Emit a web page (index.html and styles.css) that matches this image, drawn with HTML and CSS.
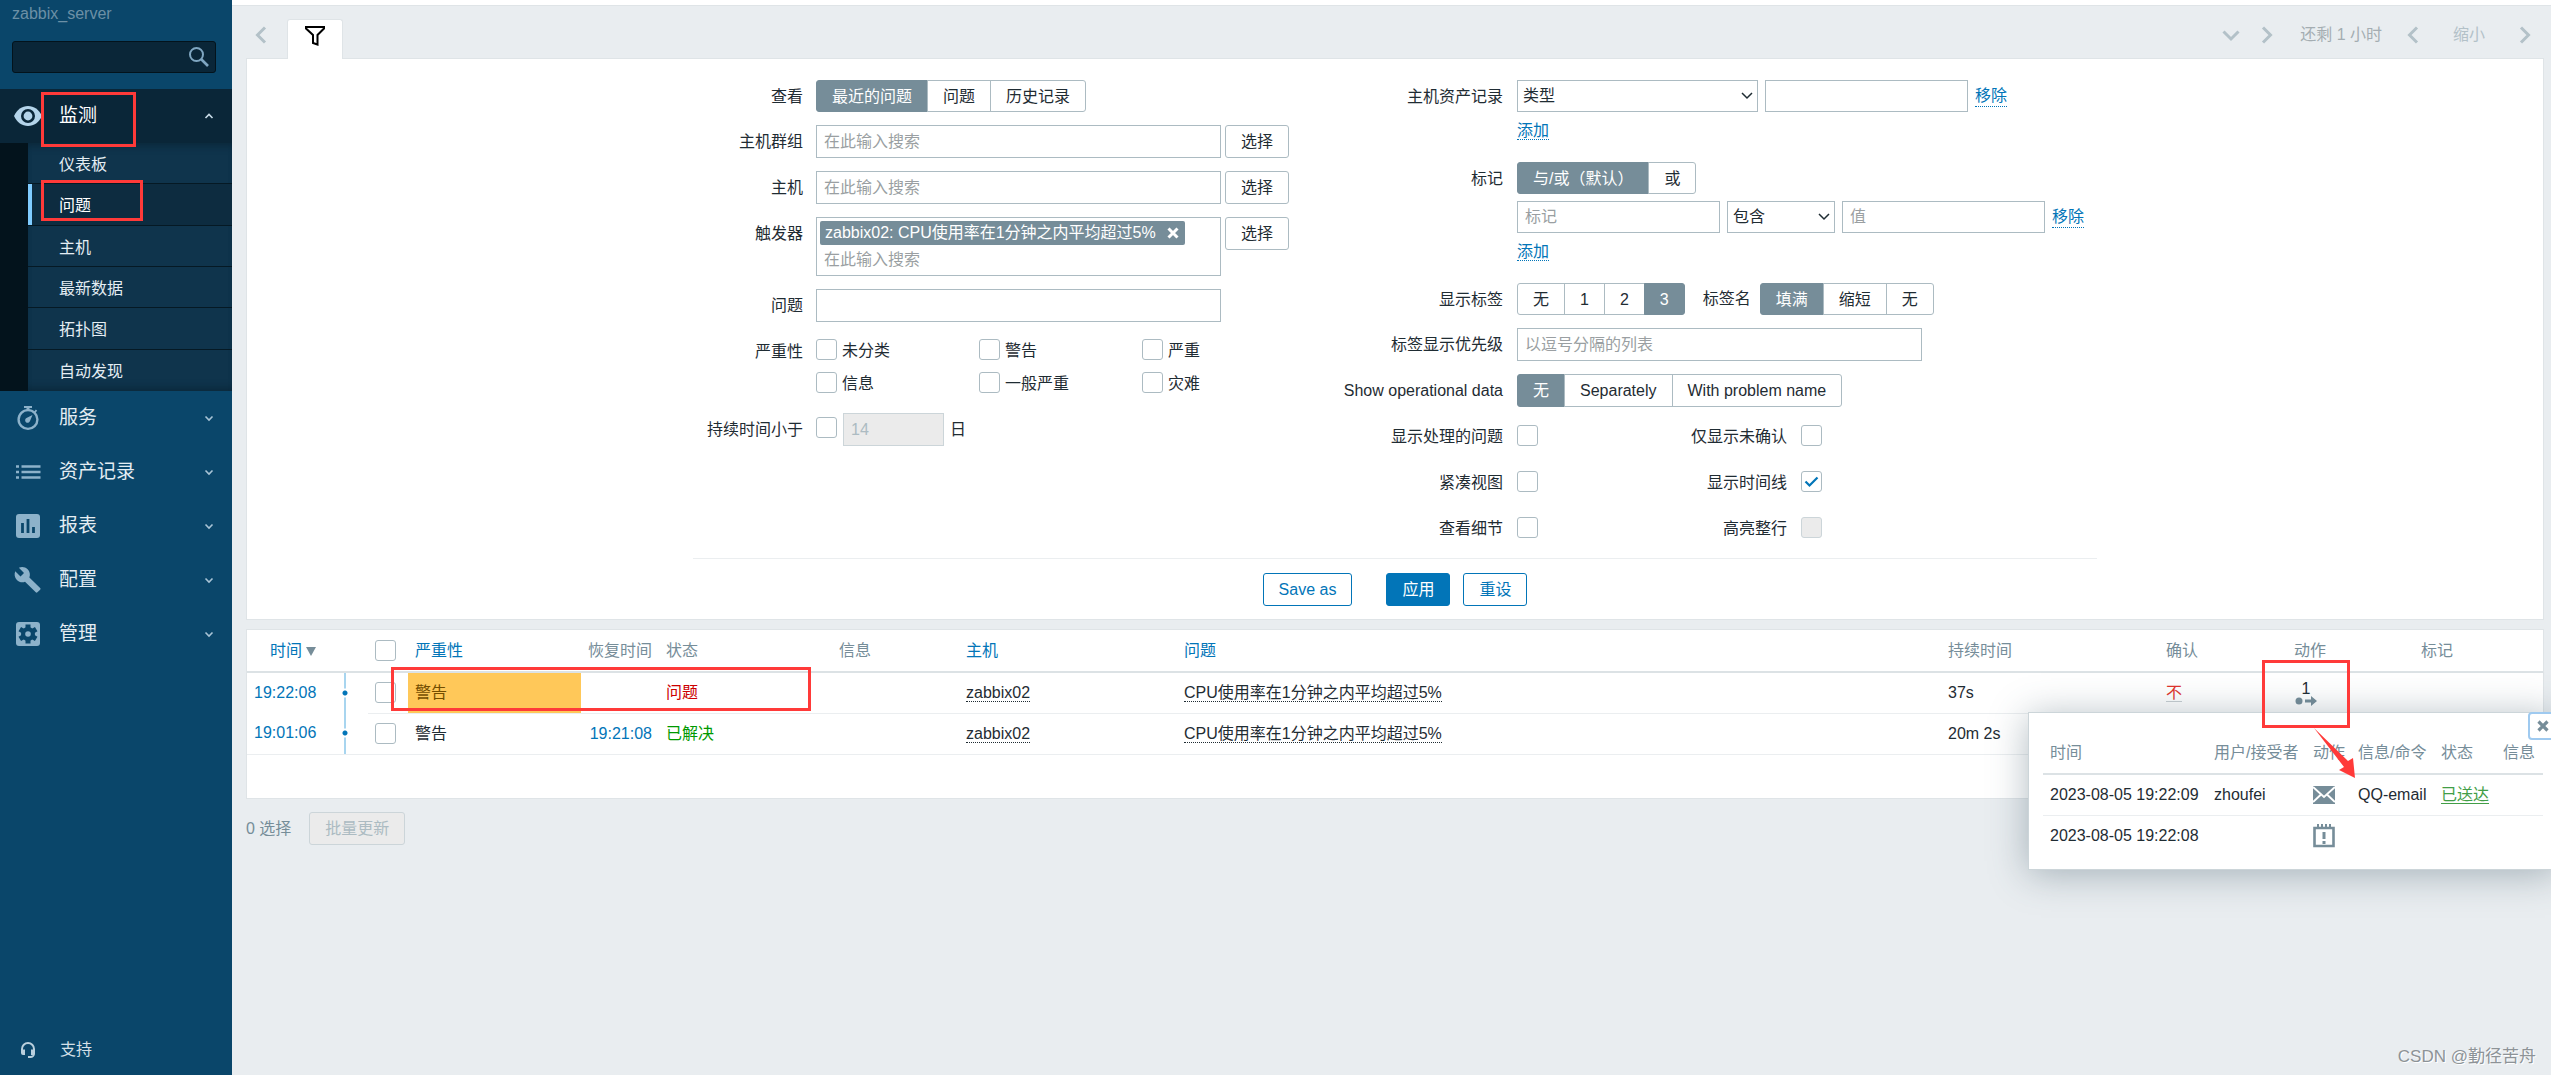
FILE: index.html
```html
<!DOCTYPE html>
<html lang="zh-CN">
<head>
<meta charset="utf-8">
<title>问题</title>
<link rel="stylesheet" href="styles.css">
</head>
<body>
<div class="page">
  <aside class="sidebar">
    <div class="server-name">zabbix_server</div>
    <form class="search">
      <input type="text" aria-label="搜索">
      <button type="button" aria-label="搜索"><svg width="20" height="20" viewBox="0 0 20 20"><circle cx="7.500" cy="7.500" r="6.500" fill="none" stroke="#7fa6c1" stroke-width="2"/><path d="M12 12l7 7" stroke="#7fa6c1" stroke-width="2.600"/></svg></button>
    </form>
    <nav>
      <ul class="menu">
        <li class="open">
          <a class="menu-item" href="#">
            <svg class="icon" width="30" height="30" viewBox="0 0 30 30"><path d="M1 15C4 8.500 9 5 15 5s11 3.500 14 10c-3 6.500-8 10-14 10S4 21.500 1 15z" fill="#b4d4ea"/><circle cx="15" cy="15" r="5.700" fill="#b4d4ea" stroke="#0a2638" stroke-width="2.600"/></svg>
            <span>监测</span>
            <svg class="chev" width="10" height="10" viewBox="0 0 10 10"><path d="M1.500 7L5 3.500 8.500 7" fill="none" stroke="#c9dbe7" stroke-width="1.600"/></svg>
          </a>
          <span class="mark mark-monitoring"></span>
          <ul class="submenu">
            <li><a href="#">仪表板</a></li>
            <li class="selected"><a href="#">问题</a><span class="mark mark-problems"></span></li>
            <li><a href="#">主机</a></li>
            <li><a href="#">最新数据</a></li>
            <li><a href="#">拓扑图</a></li>
            <li><a href="#">自动发现</a></li>
          </ul>
        </li>
        <li>
          <a class="menu-item" href="#">
            <svg class="icon" width="30" height="30" viewBox="0 0 30 30"><g fill="none" stroke="#8db2ca"><circle cx="15" cy="16.500" r="9.400" stroke-width="2.400"/><path d="M11 4h8" stroke-width="2"/><path d="M15 4v3" stroke-width="3"/><path d="M21.500 9.500l2-2.300" stroke-width="1.800"/></g><path d="M19.500 12l-2.500 6a2.500 2.500 0 1 1-3.500-3z" fill="#8db2ca"/></svg>
            <span>服务</span>
            <svg class="chev" width="10" height="10" viewBox="0 0 10 10"><path d="M1.500 3.500L5 7l3.500-3.500" fill="none" stroke="#a9c4d6" stroke-width="1.600"/></svg>
          </a>
        </li>
        <li>
          <a class="menu-item" href="#">
            <svg class="icon" width="30" height="30" viewBox="0 0 30 30"><path d="M3 9.500h3M8.500 9.500h19M3 15h3M8.500 15h19M3 20.500h3M8.500 20.500h19" stroke="#8db2ca" stroke-width="2.600"/></svg>
            <span>资产记录</span>
            <svg class="chev" width="10" height="10" viewBox="0 0 10 10"><path d="M1.500 3.500L5 7l3.500-3.500" fill="none" stroke="#a9c4d6" stroke-width="1.600"/></svg>
          </a>
        </li>
        <li>
          <a class="menu-item" href="#">
            <svg class="icon" width="30" height="30" viewBox="0 0 30 30"><rect x="3" y="3" width="24" height="24" rx="3" fill="#8db2ca"/><path d="M9.500 12v10M15 8v14M20.500 16v6" stroke="#0a466a" stroke-width="2.800"/></svg>
            <span>报表</span>
            <svg class="chev" width="10" height="10" viewBox="0 0 10 10"><path d="M1.500 3.500L5 7l3.500-3.500" fill="none" stroke="#a9c4d6" stroke-width="1.600"/></svg>
          </a>
        </li>
        <li>
          <a class="menu-item" href="#">
            <svg class="icon" width="30" height="30" viewBox="0 0 24 24"><path fill="#8db2ca" d="M21.700 18.400l-8.600-8.500c.9-2.200.4-4.700-1.400-6.500-1.900-1.900-4.700-2.200-7-1.200l4.100 4.100L6 9.100 1.800 5C.8 7.300 1.300 10.100 3.100 11.900c1.800 1.800 4.300 2.300 6.500 1.400l8.600 8.500c.4.400 1 .4 1.300 0l2.200-2.100c.4-.4.400-1 0-1.300z"/></svg>
            <span>配置</span>
            <svg class="chev" width="10" height="10" viewBox="0 0 10 10"><path d="M1.500 3.500L5 7l3.500-3.500" fill="none" stroke="#a9c4d6" stroke-width="1.600"/></svg>
          </a>
        </li>
        <li>
          <a class="menu-item" href="#">
            <svg class="icon" width="30" height="30" viewBox="0 0 30 30"><rect x="3" y="3" width="24" height="24" rx="3" fill="#8db2ca"/><circle cx="15" cy="15" r="7" fill="#0a466a"/><path d="M15 5.500v19M6.800 10.200l16.400 9.600M23.200 10.200L6.800 19.800" stroke="#0a466a" stroke-width="5"/><circle cx="15" cy="15" r="2.800" fill="#8db2ca"/></svg>
            <span>管理</span>
            <svg class="chev" width="10" height="10" viewBox="0 0 10 10"><path d="M1.500 3.500L5 7l3.500-3.500" fill="none" stroke="#a9c4d6" stroke-width="1.600"/></svg>
          </a>
        </li>
      </ul>
    </nav>
    <a class="support" href="#">
      <svg class="icon" width="30" height="18" viewBox="0 0 30 18"><path d="M9 11V8a6 6 0 0 1 12 0v4.500a3.500 3.500 0 0 1-3.500 3.500H15" fill="none" stroke="#b9cfdd" stroke-width="2"/><path d="M8 8.500h4V14h-2a2 2 0 0 1-2-2zM18 8.500h4V12a2 2 0 0 1-2 2h-2z" fill="#b9cfdd"/></svg>
      <span>支持</span>
    </a>
  </aside>

  <main class="content">
    <div class="top-strip"></div>
    <div class="tab-bar">
      <button class="nav-btn" type="button" aria-label="上一个"><svg width="18" height="18" viewBox="0 0 18 18"><path d="M13 1.500L5.500 9l7.500 7.500"/></svg></button>
      <button class="tab" type="button" aria-label="过滤器"><svg width="20" height="20" viewBox="0 0 20 20"><path d="M1 1h18v1.500L12.500 9v9.500L8 17V9L1 2.500z" fill="none" stroke="#000" stroke-width="2"/></svg></button>
      <div class="time-nav">
        <button class="nav-btn" type="button" aria-label="展开"><svg width="18" height="18" viewBox="0 0 18 18"><path d="M1.500 5.500L9 13l7.500-7.500"/></svg></button>
        <button class="nav-btn" type="button" aria-label="下一个"><svg width="18" height="18" viewBox="0 0 18 18"><path d="M5 1.500L12.500 9 5 16.500"/></svg></button>
        <span class="time-range">还剩 1 小时</span>
        <button class="nav-btn" type="button" aria-label="后退"><svg width="18" height="18" viewBox="0 0 18 18"><path d="M13 1.500L5.500 9l7.500 7.500"/></svg></button>
        <button class="zoom-out" type="button">缩小</button>
        <button class="nav-btn" type="button" aria-label="前进"><svg width="18" height="18" viewBox="0 0 18 18"><path d="M5 1.500L12.500 9 5 16.500"/></svg></button>
      </div>
    </div>

    <form class="panel filter">
      <div class="filter-body">
        <div class="fields fields-left">
          <span class="label">查看</span>
          <div class="segmented">
            <input type="radio" name="show" id="show1" checked><label for="show1">最近的问题</label>
            <input type="radio" name="show" id="show2"><label for="show2">问题</label>
            <input type="radio" name="show" id="show3"><label for="show3">历史记录</label>
          </div>
          <label class="label" for="groups">主机群组</label>
          <div class="control"><div class="multiselect"><input id="groups" type="text" placeholder="在此输入搜索"></div><button class="btn-grey" type="button">选择</button></div>
          <label class="label" for="hosts">主机</label>
          <div class="control"><div class="multiselect"><input id="hosts" type="text" placeholder="在此输入搜索"></div><button class="btn-grey" type="button">选择</button></div>
          <label class="label" for="triggers">触发器</label>
          <div class="control"><div class="multiselect"><span class="chip">zabbix02: CPU使用率在1分钟之内平均超过5%<button type="button" aria-label="移除"><svg width="12" height="12" viewBox="0 0 12 12"><path d="M1.500 1.500l9 9M10.500 1.500l-9 9" stroke="#fff" stroke-width="3"/></svg></button></span><input id="triggers" type="text" placeholder="在此输入搜索"></div><button class="btn-grey" type="button">选择</button></div>
          <label class="label" for="name">问题</label>
          <input class="text w-wide" id="name" type="text">
          <span class="label">严重性</span>
          <div class="severities">
            <label><input type="checkbox">未分类</label>
            <label><input type="checkbox">警告</label>
            <label><input type="checkbox">严重</label>
            <label><input type="checkbox">信息</label>
            <label><input type="checkbox">一般严重</label>
            <label><input type="checkbox">灾难</label>
          </div>
          <label class="label" for="age">持续时间小于</label>
          <div class="control age"><input id="age" type="checkbox"><input class="text w-days" type="text" value="14" aria-label="日" disabled><span>日</span></div>
        </div>

        <div class="fields fields-right">
          <span class="label">主机资产记录</span>
          <div class="stack">
            <div class="control wide"><select class="w-type" aria-label="主机资产记录"><option>类型</option></select><input class="text w-tag" type="text" aria-label="值"><a class="link" href="#">移除</a></div>
            <div class="add"><a class="link" href="#">添加</a></div>
          </div>
          <span class="label">标记</span>
          <div class="stack">
            <div class="segmented">
              <input type="radio" name="eval" id="eval1" checked><label for="eval1">与/或（默认）</label>
              <input type="radio" name="eval" id="eval2"><label for="eval2">或</label>
            </div>
            <div class="control wide"><input class="text w-tag" type="text" placeholder="标记" aria-label="标记"><select class="w-op" aria-label="运算符"><option>包含</option></select><input class="text w-tag" type="text" placeholder="值" aria-label="值"><a class="link" href="#">移除</a></div>
            <div class="add"><a class="link" href="#">添加</a></div>
          </div>
          <span class="label">显示标签</span>
          <div class="control">
            <div class="segmented">
              <input type="radio" name="tags" id="tags0"><label for="tags0">无</label>
              <input type="radio" name="tags" id="tags1"><label for="tags1">1</label>
              <input type="radio" name="tags" id="tags2"><label for="tags2">2</label>
              <input type="radio" name="tags" id="tags3" checked><label for="tags3">3</label>
            </div>
            <span class="inline-label">标签名</span>
            <div class="segmented">
              <input type="radio" name="tagname" id="tn0" checked><label for="tn0">填满</label>
              <input type="radio" name="tagname" id="tn1"><label for="tn1">缩短</label>
              <input type="radio" name="tagname" id="tn2"><label for="tn2">无</label>
            </div>
          </div>
          <label class="label" for="priority">标签显示优先级</label>
          <input class="text w-wide" id="priority" type="text" placeholder="以逗号分隔的列表">
          <span class="label">Show operational data</span>
          <div class="segmented tall">
            <input type="radio" name="op" id="op0" checked><label for="op0">无</label>
            <input type="radio" name="op" id="op1"><label for="op1">Separately</label>
            <input type="radio" name="op" id="op2"><label for="op2">With problem name</label>
          </div>
          <label class="label" for="c1">显示处理的问题</label>
          <div class="checks"><input id="c1" type="checkbox"><label for="c2">仅显示未确认</label><input id="c2" type="checkbox"></div>
          <label class="label" for="c3">紧凑视图</label>
          <div class="checks"><input id="c3" type="checkbox"><label for="c4">显示时间线</label><input id="c4" type="checkbox" checked></div>
          <label class="label" for="c5">查看细节</label>
          <div class="checks"><input id="c5" type="checkbox"><label for="c6">高亮整行</label><input id="c6" type="checkbox" disabled></div>
        </div>
      </div>
      <div class="filter-actions">
        <button class="btn save" type="button">Save as</button>
        <button class="btn primary" type="button">应用</button>
        <button class="btn" type="button">重设</button>
      </div>
    </form>

    <section class="panel results">
      <table class="problems">
        <colgroup><col class="c-time"><col class="c-line"><col class="c-check"><col class="c-sev"><col class="c-rec"><col class="c-status"><col class="c-info"><col class="c-host"><col><col class="c-dur"><col class="c-ack"><col class="c-act"><col class="c-tags"></colgroup>
        <thead>
          <tr><th class="right"><a href="#">时间<svg class="sort" width="10" height="9" viewBox="0 0 10 9"><path d="M0 0h10L5 9z" fill="#768d99"/></svg></a></th><th></th><th><input type="checkbox" aria-label="全选"></th><th><a href="#">严重性</a></th><th class="right">恢复时间</th><th>状态</th><th>信息</th><th><a href="#">主机</a></th><th><a href="#">问题</a></th><th>持续时间</th><th>确认</th><th>动作</th><th>标记</th></tr>
        </thead>
        <tbody>
          <tr>
            <td class="right plain"><a href="#">19:22:08</a></td><td class="timeline plain"></td><td><input type="checkbox" aria-label="选择"></td>
            <td class="warning">警告<span class="mark mark-row"></span></td><td></td><td class="red">问题</td><td></td>
            <td><a class="dotted" href="#">zabbix02</a></td><td><a class="dotted" href="#">CPU使用率在1分钟之内平均超过5%</a></td><td>37s</td><td><a class="unack" href="#">不</a></td>
            <td class="action"><button class="action-icon" type="button"><span>1</span><svg width="22" height="10" viewBox="0 0 22 10"><circle cx="4" cy="5" r="3.500" fill="#768d99"/><path d="M10 3.500h6V0l6 5-6 5V6.500h-6z" fill="#768d99"/></svg></button><span class="mark mark-action"></span><svg class="arrow" width="44" height="50" viewBox="0 0 44 50"><path d="M0 0L34 33l5-3 2 20-16-8 5-3z" fill="#ff3a39"/></svg></td><td></td>
          </tr>
          <tr>
            <td class="right"><a href="#">19:01:06</a></td><td class="timeline"></td><td><input type="checkbox" aria-label="选择"></td>
            <td>警告</td><td class="right"><a href="#">19:21:08</a></td><td class="green">已解决</td><td></td>
            <td><a class="dotted" href="#">zabbix02</a></td><td><a class="dotted" href="#">CPU使用率在1分钟之内平均超过5%</a></td><td>20m 2s</td><td></td><td></td><td></td>
          </tr>
        </tbody>
      </table>

      <div class="popup">
        <button class="close" type="button" aria-label="关闭"><svg width="12" height="12" viewBox="0 0 12 12"><path d="M1.500 1.500l9 9M10.500 1.500l-9 9" stroke="#768d99" stroke-width="3.200"/></svg></button>
        <table>
          <colgroup><col class="p-time"><col class="p-user"><col class="p-act"><col class="p-msg"><col class="p-status"><col></colgroup>
          <thead><tr><th>时间</th><th>用户/接受者</th><th>动作</th><th>信息/命令</th><th>状态</th><th>信息</th></tr></thead>
          <tbody>
            <tr><td>2023-08-05 19:22:09</td><td>zhoufei</td><td><svg width="22" height="18" viewBox="0 0 22 18"><path d="M0 0h22v18H0z" fill="#768d99"/><path d="M0 1l11 10L22 1M0 16l7.500-7M22 16l-7.500-7" fill="none" stroke="#fff" stroke-width="2"/></svg></td><td>QQ-email</td><td><a class="sent" href="#">已送达</a></td><td></td></tr>
            <tr><td>2023-08-05 19:22:08</td><td></td><td><svg width="22" height="24" viewBox="0 0 22 24"><path d="M1.500 4h19v18h-19z" fill="none" stroke="#768d99" stroke-width="2.600"/><path d="M5 0v5M9 0v5M13 0v5M17 0v5" stroke="#768d99" stroke-width="2"/><path d="M11 8v7M11 17v3" stroke="#768d99" stroke-width="3"/></svg></td><td></td><td></td><td></td></tr>
          </tbody>
        </table>
      </div>
    </section>

    <div class="bulk"><span>0 选择</span><button type="button" disabled>批量更新</button></div>
  </main>
  <div class="watermark">CSDN @勤径苦舟</div>
</div>
</body>
</html>
```
FILE: styles.css
```css
* { box-sizing: border-box; }
body {
  margin: 0;
  font: 16px/20px "Liberation Sans", "Noto Sans CJK SC", sans-serif;
  color: #1f2c33;
  background: #e9edf0;
}
button, input, select { font: inherit; color: inherit; margin: 0; }
button { cursor: pointer; }
a { color: #0275b8; text-decoration: none; }
ul { list-style: none; margin: 0; padding: 0; }
svg { display: block; }

.page { display: flex; min-height: 100vh; position: relative; overflow: hidden; }

/* sidebar */
.sidebar {
  flex: 0 0 232px;
  min-width: 0;
  display: flex;
  flex-direction: column;
  background: #0a466a;
  padding-top: 4px;
}
.server-name { padding-left: 12px; color: #6c90a6; }
.search {
  display: flex;
  margin: 17px 16px 16px 12px;
  height: 32px;
  background: #0a2638;
  border: 1px solid #03131c;
  border-radius: 3px;
}
.search input { flex: 1; width: 100%; min-width: 0; background: none; border: 0; color: #fff; }
.search button { background: none; border: 0; padding: 5px 6px; }
.menu > li { position: relative; }
.menu-item {
  display: flex;
  align-items: center;
  height: 54px;
  padding: 0 18px 0 13px;
  color: #e4edf3;
  font-size: 19px;
}
.menu-item span { flex: 1; padding-left: 16px; }
.open .menu-item { background: #0a2638; color: #fff; }
.submenu {
  display: grid;
  grid-auto-rows: 1fr;
  height: 248px;
  border-left: 28px solid #03131c;
  background: #0f344c;
  box-shadow: inset 0 8px 8px -6px #0a2638, inset 0 -8px 8px -6px #0a2638;
}
.submenu li { position: relative; border-bottom: 1px solid #051924; }
.submenu li:last-child { border-bottom: 0; }
.submenu a { display: block; padding: 12px 0 8px 31px; color: #e4edf3; }
.submenu .selected { background: #0d2c40; box-shadow: inset 4px 0 #7fccff; }
.submenu .selected a { color: #fff; }
.support { display: flex; align-items: center; margin-top: auto; padding: 0 13px 15px; color: #d4e0e8; }
.support span { padding-left: 17px; }

/* red annotations */
.mark { position: absolute; border: 3px solid #ff3a39; z-index: 20; pointer-events: none; }
.mark-monitoring { left: 41px; top: 3px; width: 95px; height: 55px; }
.mark-problems { left: 13px; top: -4px; width: 102px; height: 41px; }
.mark-row { left: -17px; top: -6px; width: 420px; height: 44px; }
.mark-action { left: -25px; top: -13px; width: 88px; height: 68px; }
.arrow { position: absolute; left: 27px; top: 55px; z-index: 20; }

/* tab bar */
.content { flex: 1; min-width: 0; }
.top-strip { height: 6px; background: #fff; border-bottom: 1px solid #dfe4e7; }
.tab-bar { display: flex; align-items: flex-start; height: 52px; padding: 13px 17px 0 20px; }
.nav-btn { display: block; padding: 7px 0; border: 0; background: none; }
.nav-btn path { fill: none; stroke: #b3c1c8; stroke-width: 3; }
.tab {
  display: flex;
  justify-content: center;
  width: 56px;
  height: 40px;
  margin-left: 17px;
  padding: 6px 0 0;
  background: #fff;
  border: 1px solid #dfe4e7;
  border-bottom: 0;
  border-radius: 3px 3px 0 0;
  position: relative;
  z-index: 1;
}
.time-nav { display: flex; align-items: center; margin-left: auto; color: #a4adb2; }
.time-nav .nav-btn + .nav-btn { margin-left: 18px; }
.time-range { padding: 0 22px 0 24px; }
.zoom-out { border: 0; background: none; padding: 6px 31px; color: #b3c1c8; }

/* panels */
.panel { margin: 0 7px 9px 14px; background: #fff; border: 1px solid #dfe4e7; position: relative; }
.filter-body { display: flex; max-width: 1404px; margin: 0 auto; padding: 21px 0 13px; border-bottom: 1px solid #ebeef0; }
.fields { display: grid; align-content: start; row-gap: 13px; }
.fields-left { grid-template-columns: 110px 475px; column-gap: 13px; width: 638px; }
.fields-right { grid-template-columns: 175px 580px; column-gap: 14px; }
.label { text-align: right; padding-top: 7px; white-space: nowrap; }
.control { display: flex; align-items: flex-start; gap: 4px; }
.control.wide { gap: 7px; }
.segmented { display: flex; position: relative; height: 32px; }
.segmented.tall { height: 33px; }
.segmented input { position: absolute; opacity: 0; width: 1px; height: 1px; }
.segmented label {
  padding: 6px 15px;
  margin-left: -1px;
  border: 1px solid #acbbc2;
  white-space: nowrap;
}
.segmented label:first-of-type { margin-left: 0; border-radius: 3px 0 0 3px; }
.segmented label:last-of-type { border-radius: 0 3px 3px 0; }
.segmented input:checked + label { background: #768d99; border-color: #768d99; color: #fff; }
.text, select { height: 33px; border: 1px solid #acbbc2; border-radius: 0; background: #fff; padding: 0 7px; }
.wide .text, select { height: 32px; }
::placeholder { color: #9a9fa2; opacity: 1; }
.multiselect { width: 405px; min-height: 33px; border: 1px solid #acbbc2; padding: 3px; }
.multiselect > input { display: block; width: 100%; height: 25px; border: 0; padding: 0 4px; }
.chip {
  display: inline-flex;
  align-items: center;
  height: 24px;
  margin-bottom: 2px;
  padding: 0 6px 0 5px;
  background: #768d99;
  border-radius: 2px;
  color: #fff;
  white-space: nowrap;
  vertical-align: top;
}
.chip button { border: 0; background: none; padding: 0 0 0 11px; }
.btn-grey { width: 64px; height: 33px; padding: 0; border: 1px solid #acbbc2; border-radius: 3px; background: #fff; }
.w-wide { width: 405px; }
.w-type { width: 241px; }
.w-tag { width: 203px; }
.w-op { width: 108px; }
.w-days { width: 101px; }
select {
  appearance: none;
  padding: 0 5px;
  background: #fff url("data:image/svg+xml,%3Csvg xmlns='http://www.w3.org/2000/svg' width='12' height='8'%3E%3Cpath d='M1 1l5 5 5-5' fill='none' stroke='%231f2c33' stroke-width='1.500'/%3E%3C/svg%3E") no-repeat right 4px center;
}
.text:disabled { background: #ebebeb; border-color: #ccd5d9; color: #acbbc2; }
.link { border-bottom: 1px dotted #0275b8; line-height: 20px; white-space: nowrap; }
.wide .link { margin-top: 6px; }
.stack { display: flex; flex-direction: column; gap: 7px; padding-bottom: 7px; }
.add { height: 23px; padding-top: 2px; }
.inline-label { padding: 6px 5px 0 14px; }
input[type="checkbox"] {
  appearance: none;
  flex: none;
  width: 21px;
  height: 21px;
  border: 1px solid #acbbc2;
  border-radius: 3px;
  background: #fff;
}
input[type="checkbox"]:checked {
  background: #fff url("data:image/svg+xml,%3Csvg xmlns='http://www.w3.org/2000/svg' width='15' height='12'%3E%3Cpath d='M1.500 5.500l4 4 8-8' fill='none' stroke='%230275b8' stroke-width='2.200'/%3E%3C/svg%3E") no-repeat center;
}
input[type="checkbox"]:disabled { background: #ebebeb; border-color: #ccd5d9; }
.severities { display: grid; grid-template-columns: repeat(3, 163px); row-gap: 12px; padding: 4px 0 7px; }
.severities label { display: flex; gap: 5px; height: 21px; line-height: 23px; }
.age { gap: 6px; }
.age input[type="checkbox"] { margin-top: 4px; }
.age span { padding-top: 7px; }
.checks { display: grid; grid-template-columns: 21px 249px 35px; height: 33px; padding-top: 5px; }
.checks label { text-align: right; padding: 2px 0 0; }
.checks input:last-child { margin-left: 14px; }
.filter-actions { display: flex; justify-content: center; gap: 13px; padding: 14px 0 13px; }
.btn { min-width: 64px; height: 33px; padding: 0 15px; background: #fff; border: 1px solid #0275b8; border-radius: 3px; color: #0275b8; }
.btn.save { margin-right: 21px; }
.btn.primary { background: #0275b8; color: #fff; }

/* tables */
table { border-collapse: collapse; table-layout: fixed; width: 100%; }
th, td { padding: 0 7px; text-align: left; font-weight: normal; white-space: nowrap; vertical-align: middle; }
th { height: 42px; color: #768d99; border-bottom: 2px solid #dce2e5; }
td { height: 41px; border-bottom: 1px solid #ebeef0; position: relative; }
.results { min-height: 170px; }
.right { text-align: right; }
td.plain { border-bottom: 0; }
.c-time { width: 76px; }
.c-line { width: 45px; }
.c-check { width: 40px; }
.c-sev { width: 173px; }
.c-rec { width: 78px; }
.c-status { width: 173px; }
.c-info { width: 127px; }
.c-host { width: 218px; }
.c-dur { width: 218px; }
.c-ack { width: 128px; }
.c-act { width: 127px; }
.c-tags { width: 129px; }
.problems input { display: block; }
.sort { display: inline-block; margin-left: 4px; }
.timeline {
  background:
    radial-gradient(circle at 22px 20px, #0275b8 2px, #fff 3px, #fff 4px, transparent 5px),
    linear-gradient(#a8d5ef, #a8d5ef) 21px 0 / 2px 100% no-repeat;
}
.warning { background: #ffc859; color: #734d00; }
.red { color: #c00; }
.green { color: #090; }
.dotted { color: #1f2c33; border-bottom: 1px dotted #1f2c33; }
.unack { color: #e0342c; border-bottom: 1px solid #c9cfd2; }
.action-icon { width: 30px; padding: 0; border: 0; background: none; }
.action-icon span { display: block; line-height: 15px; padding-right: 6px; }
.action-icon svg { margin-left: 1px; }

/* action details */
.popup {
  position: absolute;
  right: -15px;
  top: 82px;
  width: 530px;
  height: 158px;
  padding: 19px 14px 0;
  background: #fff;
  border: 1px solid #ccd5d9;
  box-shadow: 0 4px 36px rgba(60, 85, 100, 0.4);
  z-index: 10;
}
.popup table { width: 500px; }
.popup tr:last-child td { border-bottom: 0; }
.p-time { width: 164px; }
.p-user { width: 99px; }
.p-act { width: 45px; }
.p-msg { width: 83px; }
.p-status { width: 62px; }
.close {
  position: absolute;
  right: -5px;
  top: -1px;
  width: 34px;
  height: 28px;
  padding: 0 7px;
  background: #fff;
  border: 2px solid #9fcaf0;
  border-radius: 4px;
}
.sent { color: #429e47; border-bottom: 1px solid #429e47; line-height: 18px; }

.bulk { display: flex; align-items: center; gap: 18px; margin: 13px 14px; color: #768d99; }
.bulk button { height: 33px; padding: 0 15px; border: 1px solid #ccd5d9; border-radius: 3px; background: #ebebeb; color: #acbbc2; }
.watermark { position: absolute; right: 15px; bottom: 8px; font-size: 17px; color: #8d9397; text-shadow: 1px 1px #fff; }
```
